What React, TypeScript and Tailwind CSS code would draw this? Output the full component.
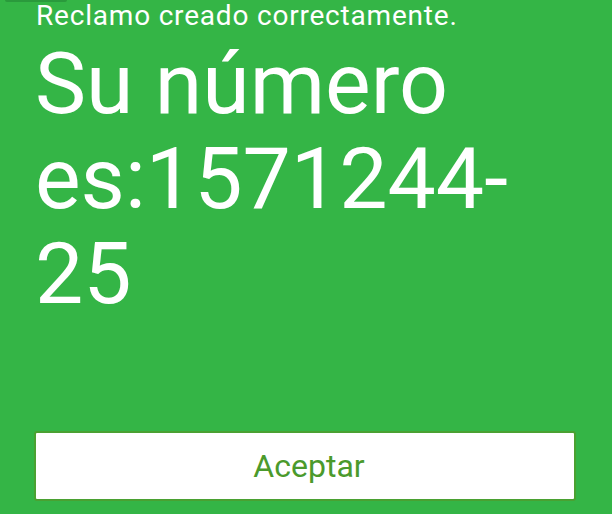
export default function App() {
  return (
    <div className="w-[612px] h-[514px] bg-[#34b546] overflow-hidden flex flex-col" style={{ fontFamily: 'Roboto, "Noto Sans", sans-serif' }}>
      <div className="ml-[5px] w-[62px] h-[2px] rounded-b-md bg-[#2a9a3c] shrink-0" />
      <div className="pl-[36px] pr-[36px] flex flex-col flex-1">
        <p className="text-[28px] leading-[28px] tracking-[0.8px] text-white">Reclamo creado correctamente.</p>
        <h1 className="text-[86px] leading-[95px] text-white mt-[6px] -ml-[1px]">
          Su número es:1571244-25
        </h1>
        <div className="flex-1" />
        <button className="mb-[13px] -ml-[2px] h-[70px] w-[542px] bg-white border-2 border-[#4aa132] rounded-[3px] text-[32px] text-[#4b9a2c] pl-[8px]">
          Aceptar
        </button>
      </div>
    </div>
  )
}
